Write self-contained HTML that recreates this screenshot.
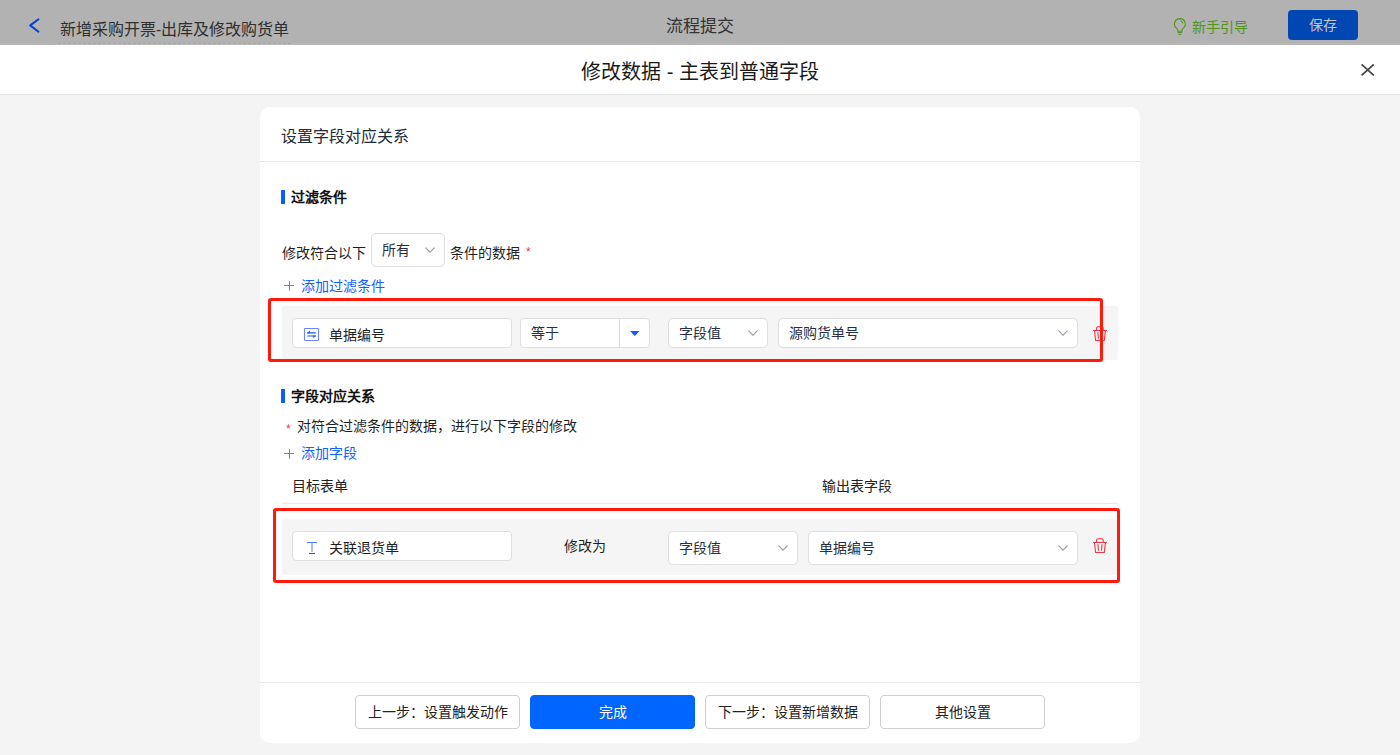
<!DOCTYPE html>
<html lang="zh-CN">
<head>
<meta charset="utf-8">
<title>修改数据</title>
<style>
*{box-sizing:border-box;margin:0;padding:0}
html,body{width:1400px;height:755px;overflow:hidden}
body{position:relative;background:#f4f4f4;font-family:"Liberation Sans",sans-serif;font-size:14px;color:#1f1f1f}
.abs{position:absolute}
.t{position:absolute;white-space:nowrap;line-height:20px;height:20px}
/* top bar */
#topbar{left:0;top:0;width:1400px;height:45px;background:linear-gradient(#b2b2b2 0 43px,#b7b7b7 43px 45px)}
#topbar .title{left:60px;top:20px;font-size:16px;color:#2f2f2f}
#topbar .dash{left:58px;top:43px;width:234px;height:1px;background:repeating-linear-gradient(90deg,#a3a3a3 0 3px,transparent 3px 5px)}
#topbar .mid{left:599.5px;width:200px;text-align:center;top:17px;font-size:17px;color:#333}
#topbar .guide{left:1192px;top:17px;font-size:14px;color:#4f9618}
#save{left:1288px;top:10px;width:70px;height:30px;border-radius:4px;background:#0047b3;color:#c6c6c6;text-align:center;line-height:30px;font-size:14px}
/* header */
#header{left:0;top:45px;width:1400px;height:50px;background:#fff;border-bottom:1px solid #e3e3e3}
#header .h{left:0;width:1400px;text-align:center;top:15px;font-size:20px;line-height:24px;height:24px;color:#1a1a1a}
/* card */
#card{left:260px;top:107px;width:880px;height:636px;background:#fff;border-radius:10px}
.hr{position:absolute;height:1px;background:#e9e9e9}
.bar{position:absolute;width:4px;height:14px;background:#0d5eff}
.b{font-weight:bold;color:#111}
.blue{color:#1062ff}
.sel{color:#273043}
.red{color:#f5343f}
.box{position:absolute;background:#fff;border:1px solid #dedede;border-radius:4px}
.row{position:absolute;background:#f5f5f5;border-radius:2px}
.redbox{position:absolute;border:3px solid #ff1a0c;border-radius:3px}
.btn{position:absolute;top:695px;width:165px;height:34px;border:1px solid #cfcfcf;border-radius:4px;background:#fff;text-align:center;line-height:32px;font-size:14px;color:#222}
.btn.primary{background:#0066ff;border-color:#0066ff;color:#fff}
svg{position:absolute;overflow:visible}
</style>
</head>
<body>
<!-- top bar -->
<div id="topbar" class="abs">
  <svg style="left:28px;top:17px" width="13" height="17" viewBox="0 0 13 17"><path d="M10.500 2.300 L2.200 8.400 L10.500 14.700" fill="none" stroke="#0b3fd0" stroke-width="2" stroke-linecap="round" stroke-linejoin="round"/></svg>
  <div class="t title">新增采购开票-出库及修改购货单</div>
  <div class="abs dash"></div>
  <div class="t mid">流程提交</div>
  <svg style="left:1173px;top:18px" width="13" height="17" viewBox="0 0 13 17"><path d="M6.900 0.600a5.400 5.400 0 0 0-3.100 9.800c.7.600 1 1.300 1 2.200v.600h4.200v-.600c0-.9.300-1.600 1-2.200a5.400 5.400 0 0 0-3.100-9.800z" fill="none" stroke="#4f9618" stroke-width="1.100"/><path d="M4.600 14.600h4.600M5.400 16.300h3" stroke="#4f9618" stroke-width="1" fill="none"/><path d="M7.400 2.900a3 3 0 0 1 2.500 2.500" stroke="#4f9618" stroke-width="1" fill="none"/></svg>
  <div class="t guide">新手引导</div>
  <div id="save" class="abs">保存</div>
</div>
<!-- header -->
<div id="header" class="abs">
  <div class="t h">修改数据 - 主表到普通字段</div>
  <svg style="left:1361px;top:18px" width="13" height="13" viewBox="0 0 13 13"><path d="M0.600 1.300 L12.800 12.300 M12.800 1.300 L0.600 12.300" stroke="#454545" stroke-width="1.700" fill="none"/></svg>
</div>
<!-- card -->
<div id="card" class="abs"></div>
<div class="t" style="left:281px;top:127px;font-size:16px;color:#222b38">设置字段对应关系</div>
<div class="hr" style="left:260px;top:161px;width:880px"></div>

<div class="bar" style="left:281px;top:190px"></div>
<div class="t b" style="left:291px;top:187px">过滤条件</div>

<div class="t" style="left:282px;top:243px">修改符合以下</div>
<div class="box" style="left:371px;top:233px;width:74px;height:34px;border-radius:5px"></div>
<div class="t sel" style="left:382px;top:240px">所有</div>
<svg style="left:425px;top:247px" width="10" height="6" viewBox="0 0 10 6"><path d="M0.500 0.600 L5 5.200 L9.500 0.600" fill="none" stroke="#9a9a9a" stroke-width="1.200"/></svg>
<div class="t" style="left:450px;top:243px">条件的数据</div>
<div class="t red" style="left:526px;top:242px;font-size:12px">*</div>

<svg style="left:284px;top:281px" width="10" height="10" viewBox="0 0 10 10"><path d="M5.500 0V9.700M0 4.500H10" stroke="#5a82ff" stroke-width="1" fill="none"/></svg>
<div class="t blue" style="left:301px;top:276px">添加过滤条件</div>

<!-- filter row -->
<div class="row" style="left:282px;top:306px;width:836px;height:54px"></div>
<div class="box" style="left:292px;top:318px;width:220px;height:30px"></div>
<svg style="left:304px;top:327.500px" width="15" height="13" viewBox="0 0 15 13"><rect x="0.500" y="0.500" width="14" height="12" rx="0.600" fill="none" stroke="#7285ff" stroke-width="1.100"/><path d="M3.200 4.900H11.800M3.200 8H11.800" stroke="#0d5eff" stroke-width="1.200" fill="none"/><path d="M3 5.300L5.900 2.600V5.300zM12 7.600L9.100 10.300V7.600z" fill="#0d5eff"/></svg>
<div class="t" style="left:329px;top:325px">单据编号</div>
<div class="box" style="left:520px;top:318px;width:130px;height:30px"></div>
<div class="abs" style="left:619px;top:319px;width:1px;height:28px;background:#dcdcdc"></div>
<div class="t sel" style="left:531px;top:323px">等于</div>
<svg style="left:630px;top:331px" width="10" height="5" viewBox="0 0 10 5"><path d="M0 0H9.600L4.800 5z" fill="#0d5eff"/></svg>
<div class="box" style="left:668px;top:318px;width:100px;height:30px;border-radius:5px"></div>
<div class="t sel" style="left:679px;top:323px">字段值</div>
<svg style="left:748px;top:330px" width="10" height="6" viewBox="0 0 10 6"><path d="M0.500 0.600 L5 5.200 L9.500 0.600" fill="none" stroke="#939aa5" stroke-width="1.100"/></svg>
<div class="box" style="left:778px;top:318px;width:300px;height:30px;border-radius:5px"></div>
<div class="t sel" style="left:789px;top:323px">源购货单号</div>
<svg style="left:1058px;top:330px" width="10" height="6" viewBox="0 0 10 6"><path d="M0.500 0.600 L5 5.200 L9.500 0.600" fill="none" stroke="#939aa5" stroke-width="1.100"/></svg>
<svg class="trash" style="left:1093px;top:326px" width="14" height="15" viewBox="0 0 14 15"><path d="M0 4.500H14M3.600 4.300V2.300a1.500 1.500 0 0 1 1.500-1.500h3.600a1.500 1.500 0 0 1 1.500 1.500V4.300M1.500 4.700L2.600 14.500H11.300L12.400 4.700M4.900 6.300L5.500 12.700M9 6.300L8.400 12.700" fill="none" stroke="#f23645" stroke-width="1.100"/></svg>
<div class="redbox" style="left:268px;top:298px;width:835px;height:64px"></div>

<!-- section 2 -->
<div class="bar" style="left:281px;top:389px"></div>
<div class="t b" style="left:291px;top:386px">字段对应关系</div>
<div class="t red" style="left:286px;top:419px;font-size:12px">*</div>
<div class="t" style="left:297px;top:416px">对符合过滤条件的数据，进行以下字段的修改</div>
<svg style="left:284px;top:449px" width="10" height="10" viewBox="0 0 10 10"><path d="M5.500 0V9.700M0 4.500H10" stroke="#5a82ff" stroke-width="1" fill="none"/></svg>
<div class="t blue" style="left:301px;top:443px">添加字段</div>
<div class="t" style="left:292px;top:476px;color:#222">目标表单</div>
<div class="t" style="left:822px;top:476px;color:#222">输出表字段</div>
<div class="hr" style="left:282px;top:503px;width:836px"></div>

<div class="row" style="left:282px;top:519px;width:836px;height:56px"></div>
<div class="box" style="left:292px;top:531px;width:220px;height:30px"></div>
<svg style="left:307px;top:542px" width="10" height="12" viewBox="0 0 10 12"><path d="M0 0.500H10" stroke="#4d79ff" stroke-width="1" fill="none"/><path d="M5 1V9.800" stroke="#7f95ff" stroke-width="1.300" fill="none"/><path d="M2 11.500H8" stroke="#0d5eff" stroke-width="1.100" fill="none"/></svg>
<div class="t" style="left:329px;top:538px">关联退货单</div>
<div class="t" style="left:564px;top:536px">修改为</div>
<div class="box" style="left:668px;top:531px;width:130px;height:34px;border-radius:5px"></div>
<div class="t sel" style="left:679px;top:538px">字段值</div>
<svg style="left:778px;top:545px" width="10" height="6" viewBox="0 0 10 6"><path d="M0.500 0.600 L5 5.200 L9.500 0.600" fill="none" stroke="#939aa5" stroke-width="1.100"/></svg>
<div class="box" style="left:808px;top:531px;width:270px;height:34px;border-radius:5px"></div>
<div class="t sel" style="left:819px;top:538px">单据编号</div>
<svg style="left:1058px;top:545px" width="10" height="6" viewBox="0 0 10 6"><path d="M0.500 0.600 L5 5.200 L9.500 0.600" fill="none" stroke="#939aa5" stroke-width="1.100"/></svg>
<svg class="trash" style="left:1093px;top:538px" width="14" height="15" viewBox="0 0 14 15"><path d="M0 4.500H14M3.600 4.300V2.300a1.500 1.500 0 0 1 1.500-1.500h3.600a1.500 1.500 0 0 1 1.500 1.500V4.300M1.500 4.700L2.600 14.500H11.300L12.400 4.700M4.900 6.300L5.500 12.700M9 6.300L8.400 12.700" fill="none" stroke="#f23645" stroke-width="1.100"/></svg>
<div class="redbox" style="left:273px;top:508px;width:847px;height:75px"></div>

<!-- footer -->
<div class="hr" style="left:260px;top:682px;width:880px"></div>
<div class="btn" style="left:355px">上一步：设置触发动作</div>
<div class="btn primary" style="left:530px">完成</div>
<div class="btn" style="left:705px">下一步：设置新增数据</div>
<div class="btn" style="left:880px">其他设置</div>
</body>
</html>
